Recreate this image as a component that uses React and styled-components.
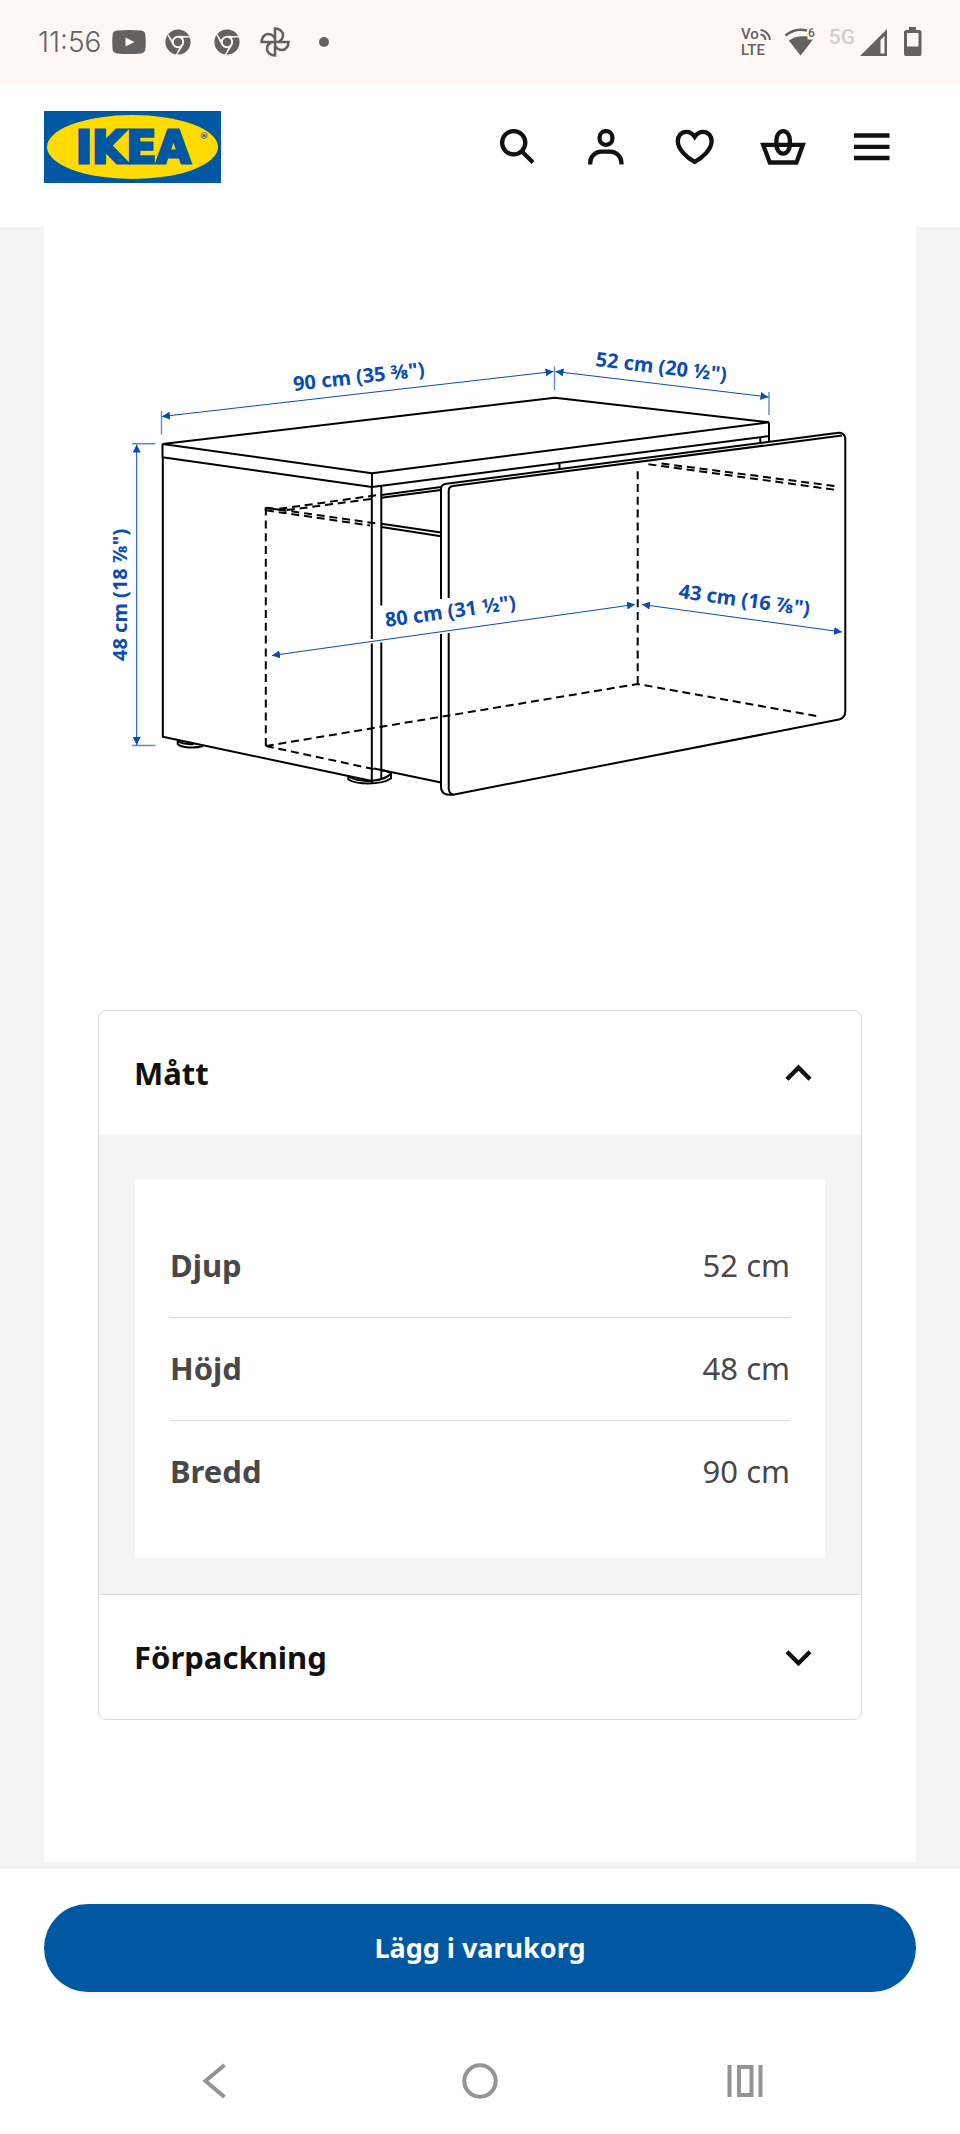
import React, { useState } from 'react';
import styled, { createGlobalStyle, ThemeProvider } from 'styled-components';
import { FaChrome } from 'react-icons/fa';

const theme = {
  colors: {
    ink: '#111111',
    text: '#484848',
    blue: '#0058a3',
    yellow: '#ffdb00',
    dimension: '#0a4bb5',
    line: '#dcdcdc',
    page: '#f4f4f4',
    white: '#ffffff',
    statusBar: '#fff7f4',
    status: '#656160',
    statusMuted: '#d3cdcb',
    nav: '#949494',
  },
};

const GlobalStyle = createGlobalStyle`
  *,
  *::before,
  *::after {
    box-sizing: border-box;
  }

  body {
    margin: 0;
    background: #ffffff;
    font-family: 'Noto Sans', sans-serif;
  }

  button {
    border: 0;
    padding: 0;
    background: none;
    font-family: inherit;
    cursor: pointer;
  }

  svg {
    display: block;
    flex-shrink: 0;
  }
`;

const StatusBarWrapper = styled.div`
  display: flex;
  justify-content: space-between;
  align-items: center;
  height: 83px;
  padding: 0 37px 0 38px;
  background: ${({ theme }) => theme.colors.statusBar};
  color: ${({ theme }) => theme.colors.status};
`;

const StatusGroup = styled.div`
  display: flex;
  align-items: center;
  gap: ${({ $gap }) => $gap}px;
`;

const Clock = styled.time`
  width: 62px;
  font-family: Inter, sans-serif;
  font-size: 28px;
  font-weight: 300;
  line-height: 32px;
`;

const Network = styled.span`
  height: 30px;
  margin-right: -8px;
  font-family: Roboto, sans-serif;
  font-size: 21px;
  font-weight: 500;
  line-height: 20px;
  color: ${({ theme }) => theme.colors.statusMuted};
`;

const Header = styled.header`
  display: flex;
  justify-content: space-between;
  align-items: center;
  padding: 28px 64px 44px 44px;
  background: ${({ theme }) => theme.colors.white};
`;

const LogoLink = styled.a`
  display: block;
`;

const HeaderNav = styled.nav`
  display: flex;
  gap: 41px;
`;

const IconButton = styled.button`
  color: ${({ theme }) => theme.colors.ink};
`;

const Main = styled.main`
  padding: 0 44px 7px;
  background: ${({ theme }) => theme.colors.page};
`;

const Sheet = styled.section`
  padding: 103px 54px 142px;
  background: ${({ theme }) => theme.colors.white};
`;

const Figure = styled.figure`
  margin: 0 0 200px;

  svg {
    width: 100%;
    height: auto;
  }
`;

const Accordion = styled.div`
  border: 1px solid ${({ theme }) => theme.colors.line};
  border-radius: 8px;
  overflow: hidden;
`;

const AccordionItem = styled.div`
  & + & {
    border-top: 1px solid ${({ theme }) => theme.colors.line};
  }
`;

const AccordionTitle = styled.h2`
  margin: 0;
`;

const AccordionButton = styled.button`
  display: flex;
  justify-content: space-between;
  align-items: center;
  width: 100%;
  height: 124px;
  padding: 0 36px 0 35px;
  color: ${({ theme }) => theme.colors.ink};
  font-size: 31px;
  font-weight: 700;
  line-height: 44px;
`;

const AccordionBody = styled.div`
  padding: 44px 36px 36px;
  background: ${({ theme }) => theme.colors.page};
`;

const MeasureBox = styled.div`
  padding: 36px 35px 35px;
  background: ${({ theme }) => theme.colors.white};
`;

const MeasureTable = styled.table`
  width: 100%;
  border-spacing: 0;
  color: ${({ theme }) => theme.colors.text};
  font-size: 31px;
  line-height: 44px;

  th,
  td {
    height: 103px;
    padding: 0 0 2px;
    border-bottom: 1px solid ${({ theme }) => theme.colors.line};
  }

  th {
    font-weight: 700;
    text-align: left;
  }

  td {
    text-align: right;
  }

  tr:last-child th,
  tr:last-child td {
    height: 102px;
    border-bottom: 0;
  }
`;

const Purchase = styled.div`
  padding: 35px 44px 36px;
  background: ${({ theme }) => theme.colors.white};
`;

const PrimaryButton = styled.button`
  display: block;
  width: 100%;
  height: 88px;
  border-radius: 44px;
  background: ${({ theme }) => theme.colors.blue};
  color: ${({ theme }) => theme.colors.white};
  font-size: 27px;
  font-weight: 700;
  line-height: 40px;
`;

const SystemNav = styled.nav`
  display: flex;
  align-items: center;
  height: 106px;
  padding: 0 82px;
  background: ${({ theme }) => theme.colors.white};
`;

const SystemButton = styled.button`
  display: flex;
  flex: 1;
  justify-content: center;
  color: ${({ theme }) => theme.colors.nav};
`;

const LogoText = styled.text`
  font-family: 'DejaVu Sans', sans-serif;
  font-size: ${({ $size }) => $size}px;
  font-weight: 700;
  text-anchor: middle;
`;

const StatusText = styled.text`
  font-family: Roboto, sans-serif;
  font-size: ${({ $size }) => $size}px;
  font-weight: 500;
  fill: currentColor;
`;

const DimensionText = styled.text`
  font-family: 'Noto Sans', sans-serif;
  font-size: 20px;
  font-weight: 700;
  fill: ${({ theme }) => theme.colors.dimension};
`;

const StatusBar = () => (
  <StatusBarWrapper>
    <StatusGroup $gap={12}>
      <Clock>11:56</Clock>
      <StatusGroup $gap={19}>
        <svg width="34" height="24" viewBox="0 0 34 24" fill="currentColor">
          <path
            fillRule="evenodd"
            d="M5 .6Q17-.6 29 .6Q33 1 33.4 5Q34 12 33.4 19Q33 23 29 23.4Q17 24.6 5 23.4Q1 23 .6 19Q0 12 .6 5Q1 1 5 .6ZM13.5 7.5V16.5L22.5 12Z"
          />
        </svg>
        <StatusGroup $gap={23}>
          <FaChrome size={26} />
          <FaChrome size={26} />
        </StatusGroup>
        <StatusGroup $gap={28}>
          <svg width="32" height="32" viewBox="-16 -16 32 32" fill="none" stroke="currentColor" strokeWidth="2.6">
            {[0, 90, 180, 270].map((angle) => (
              <path key={angle} transform={`rotate(${angle})`} d="M0 0V-13.5C4.5-13.5 8-10.5 8-7C8-4 6-1.5 4-.5" />
            ))}
          </svg>
          <svg width="10" height="10" viewBox="0 0 10 10" fill="currentColor">
            <circle cx="5" cy="5" r="5" />
          </svg>
        </StatusGroup>
      </StatusGroup>
    </StatusGroup>
    <StatusGroup $gap={13}>
      <svg width="32" height="40" viewBox="-2 -5 32 40">
        <StatusText $size={15} x="0" y="12">Vo</StatusText>
        <StatusText $size={15} x="0" y="28">LTE</StatusText>
        <path
          d="M19.500 3a10.500 10.500 0 0 1 9.500 10M19.500 7.500a6 6 0 0 1 5 5.500"
          fill="none"
          stroke="currentColor"
          strokeWidth="2"
        />
      </svg>
      <svg width="32" height="40" viewBox="0 -5 32 40">
        <path d="M1.500 8.500Q11 .5 23 3.500" fill="none" stroke="currentColor" strokeWidth="2.600" />
        <path d="M.5 8L5 13.500Q12 8 23.500 9.500V12.500H29L16.500 28.500Z" fill="currentColor" />
        <StatusText $size={12} x="24" y="10">6</StatusText>
      </svg>
      <Network>5G</Network>
      <svg width="28" height="30" viewBox="0 0 28 30">
        <path fillRule="evenodd" d="M0 29L27 2V29ZM20.500 13V26.500H24.500V9Z" fill="currentColor" />
      </svg>
      <svg width="22" height="30" viewBox="-2 0 22 30">
        <path
          fillRule="evenodd"
          d="M6 0H13V3H16Q18.500 3 18.500 5.500V27Q18.500 29 16.500 29H3Q1 29 1 27V5.500Q1 3 3.500 3H6ZM4 6V19.500H15.500V6Z"
          fill="currentColor"
        />
      </svg>
    </StatusGroup>
  </StatusBarWrapper>
);

const Logo = () => (
  <svg width="177" height="72" viewBox="0 0 177 72" role="img" aria-label="IKEA">
    <rect width="177" height="72" fill={theme.colors.blue} />
    <ellipse cx="88.500" cy="36" rx="85.500" ry="32" fill={theme.colors.yellow} />
    <LogoText $size={44} x="89" y="52" fill={theme.colors.blue} stroke={theme.colors.blue} strokeWidth="3">
      IKEA
    </LogoText>
    <LogoText $size={9} x="160" y="28" fill={theme.colors.blue}>®</LogoText>
  </svg>
);

const HEADER_ICONS = [
  {
    label: 'Sök',
    shape: (
      <>
        <circle cx="21.700" cy="19.700" r="11.600" />
        <path d="M30 28.500L41 39.500" />
      </>
    ),
  },
  {
    label: 'Logga in',
    shape: (
      <>
        <rect x="18.600" y="8.200" width="12.800" height="13.600" rx="6.200" />
        <path d="M9.200 41.500V39.700a11 11 0 0 1 11-11h9.200a11 11 0 0 1 11 11v1.800" />
      </>
    ),
  },
  {
    label: 'Inköpslista',
    shape: (
      <path d="M24.700 13.800C22.500 10.400 19.500 8.800 16.300 8.800C11.200 8.800 7.800 13 7.800 18C7.800 26.500 17 34.700 24.700 38.900C32.400 34.700 41.600 26.500 41.600 18C41.600 13 38.200 8.800 33.100 8.800C29.900 8.800 26.900 10.400 24.700 13.800Z" />
    ),
  },
  {
    label: 'Varukorg',
    shape: (
      <>
        <path d="M4.200 21.900H43.800L37.500 39.500H10.800Z" />
        <rect x="17.400" y="8.200" width="13.500" height="22.400" rx="6.700" ry="9" />
      </>
    ),
  },
  {
    label: 'Meny',
    shape: <path d="M6 12.500H41.500M6 23.800H41.500M6 35H41.500" />,
  },
];

const Chevron = ({ isOpen }) => (
  <svg width="54" height="54" viewBox="0 0 54 54" fill="none" stroke="currentColor" strokeWidth="4.400">
    <path d={isOpen ? 'M16 33.200L27.500 21.700L39 33.200' : 'M16 21.700L27.500 33.200L39 21.700'} />
  </svg>
);

const DRAWER_DIMENSIONS = [
  { label: '90 cm (35 ⅜")', line: 'M162 416.500L553.500 371.500', at: [294, 391], angle: -6.5 },
  { label: '52 cm (20 ½")', line: 'M555.500 371.500L768.500 397', at: [595, 366], angle: 6.8 },
  { label: '48 cm (18 ⅞")', line: 'M136.700 444.500V745', at: [127, 661], angle: -90 },
  { label: '80 cm (31 ½")', line: 'M272 655.500L635 604.500', at: [386, 627], angle: -7.8 },
  { label: '43 cm (16 ⅞")', line: 'M642 604.500L842 632', at: [678, 598], angle: 7.7 },
];

const DrawerDrawing = () => (
  <svg viewBox="98 330 764 480" role="img" aria-label="Måttskiss">
    <defs>
      <marker
        id="arrow"
        viewBox="0 0 8 8"
        refX="8"
        refY="4"
        markerWidth="8"
        markerHeight="8"
        markerUnits="userSpaceOnUse"
        orient="auto-start-reverse"
      >
        <path d="M0 0L8 4L0 8Z" fill={theme.colors.dimension} />
      </marker>
    </defs>
    <g fill="none" stroke="#000000" strokeWidth="2" strokeLinejoin="round">
      {/* top */}
      <path d="M162.500 444L554.700 397.800L769 422.300M162.500 444L372 473.200L769 422.300M162.500 457.300L372 487L769 436M162.500 444V457.300M372 473.200V487M769 422.300V441.500M760.300 437.500V442.500M559.500 463V468.500" />
      {/* side panel */}
      <path d="M162.800 457V736.800L372 781M371.800 487V603M371.800 603V639M371.800 643.500V783M381.300 485.500V605.500M381.300 642.500V779" />
      {/* rails */}
      <path d="M381.500 495L441 487M381.500 497.800L441 490M381.500 523.700L441 532.600M381.500 527L441 536.300M374 768.500L441 782.600" />
      {/* feet */}
      <path d="M177.700 740.500V744C181 748 196 748.500 203 746M177.700 741C182 744 187 744.500 194 744" />
      <path d="M348.300 776V779.500C356 784.500 380 785.500 391 778.500V773Q386 770.500 381 770M348.300 776.500Q358 782 372 780.800Q386 779.500 391 773.500" />
      {/* drawer front */}
      <path d="M441 599V489Q441 484.500 446.500 483.800L836.500 433Q845.300 431.500 845.300 440V711Q845.300 718 839 719.500L453 794.700Q441 796 441 787V634" />
      <path d="M448.700 598V491Q448.700 486.500 453 486L842 435.500M448.700 633V789Q449 793 453 794.700" />
      {/* hidden edges */}
      <path
        strokeDasharray="8 4.800"
        d="M265.800 746V508M265.800 746L637.700 684L817.500 716.200M265.800 746L378 770M637.700 684V470M266 507.700L376 523.400M266 510.300L370 525.500M376 495.300L278 509M371 499L284 510.500M648.500 464.300L836 489.900M661.500 463.500L838 486.500"
      />
      <path d="M265.800 511V508L286 510.500" />
    </g>
    <g fill="none" stroke={theme.colors.dimension}>
      <path
        strokeWidth="1.400"
        strokeOpacity="0.65"
        d="M161.500 411V434.500M554.500 366.500V390M769 392V415M132 443.800H155.500M132 745.500H155.500"
      />
      {DRAWER_DIMENSIONS.map(({ label, line }) => (
        <path key={label} d={line} strokeWidth="1" markerStart="url(#arrow)" markerEnd="url(#arrow)" />
      ))}
    </g>
    {DRAWER_DIMENSIONS.map(({ label, at, angle }) => (
      <DimensionText key={label} transform={`translate(${at.join(' ')}) rotate(${angle})`}>
        {label}
      </DimensionText>
    ))}
  </svg>
);

const MEASURES = [
  { name: 'Djup', value: '52 cm' },
  { name: 'Höjd', value: '48 cm' },
  { name: 'Bredd', value: '90 cm' },
];

const Measures = () => (
  <MeasureBox>
    <MeasureTable>
      <tbody>
        {MEASURES.map(({ name, value }) => (
          <tr key={name}>
            <th scope="row">{name}</th>
            <td>{value}</td>
          </tr>
        ))}
      </tbody>
    </MeasureTable>
  </MeasureBox>
);

const Section = ({ title, defaultOpen = false, children }) => {
  const [isOpen, setIsOpen] = useState(defaultOpen);

  return (
    <AccordionItem>
      <AccordionTitle>
        <AccordionButton type="button" aria-expanded={isOpen} onClick={() => setIsOpen(!isOpen)}>
          {title}
          <Chevron isOpen={isOpen} />
        </AccordionButton>
      </AccordionTitle>
      {isOpen && children && <AccordionBody>{children}</AccordionBody>}
    </AccordionItem>
  );
};

const App = () => (
  <ThemeProvider theme={theme}>
    <GlobalStyle />
    <StatusBar />
    <Header>
      <LogoLink href="#">
        <Logo />
      </LogoLink>
      <HeaderNav>
        {HEADER_ICONS.map(({ label, shape }) => (
          <IconButton key={label} type="button" aria-label={label}>
            <svg width="48" height="48" viewBox="0 0 48 48" fill="none" stroke="currentColor" strokeWidth="4.300">
              {shape}
            </svg>
          </IconButton>
        ))}
      </HeaderNav>
    </Header>
    <Main>
      <Sheet>
        <Figure>
          <DrawerDrawing />
        </Figure>
        <Accordion>
          <Section title="Mått" defaultOpen>
            <Measures />
          </Section>
          <Section title="Förpackning" />
        </Accordion>
      </Sheet>
    </Main>
    <Purchase>
      <PrimaryButton type="button">Lägg i varukorg</PrimaryButton>
    </Purchase>
    <SystemNav>
      <SystemButton type="button" aria-label="Tillbaka">
        <svg width="36" height="36" viewBox="0 0 36 36" fill="none" stroke="currentColor" strokeWidth="4">
          <path d="M27.500 2L8.500 18L27.500 34" />
        </svg>
      </SystemButton>
      <SystemButton type="button" aria-label="Hem">
        <svg width="36" height="36" viewBox="0 0 36 36" fill="none" stroke="currentColor" strokeWidth="4">
          <circle cx="18" cy="18" r="15.700" />
        </svg>
      </SystemButton>
      <SystemButton type="button" aria-label="Senaste appar">
        <svg width="36" height="36" viewBox="0 0 36 36" fill="none" stroke="currentColor" strokeWidth="4">
          <path d="M2.500 2V34M33.500 2V34M12 4H24.500V32H12Z" />
        </svg>
      </SystemButton>
    </SystemNav>
  </ThemeProvider>
);

export default App;
